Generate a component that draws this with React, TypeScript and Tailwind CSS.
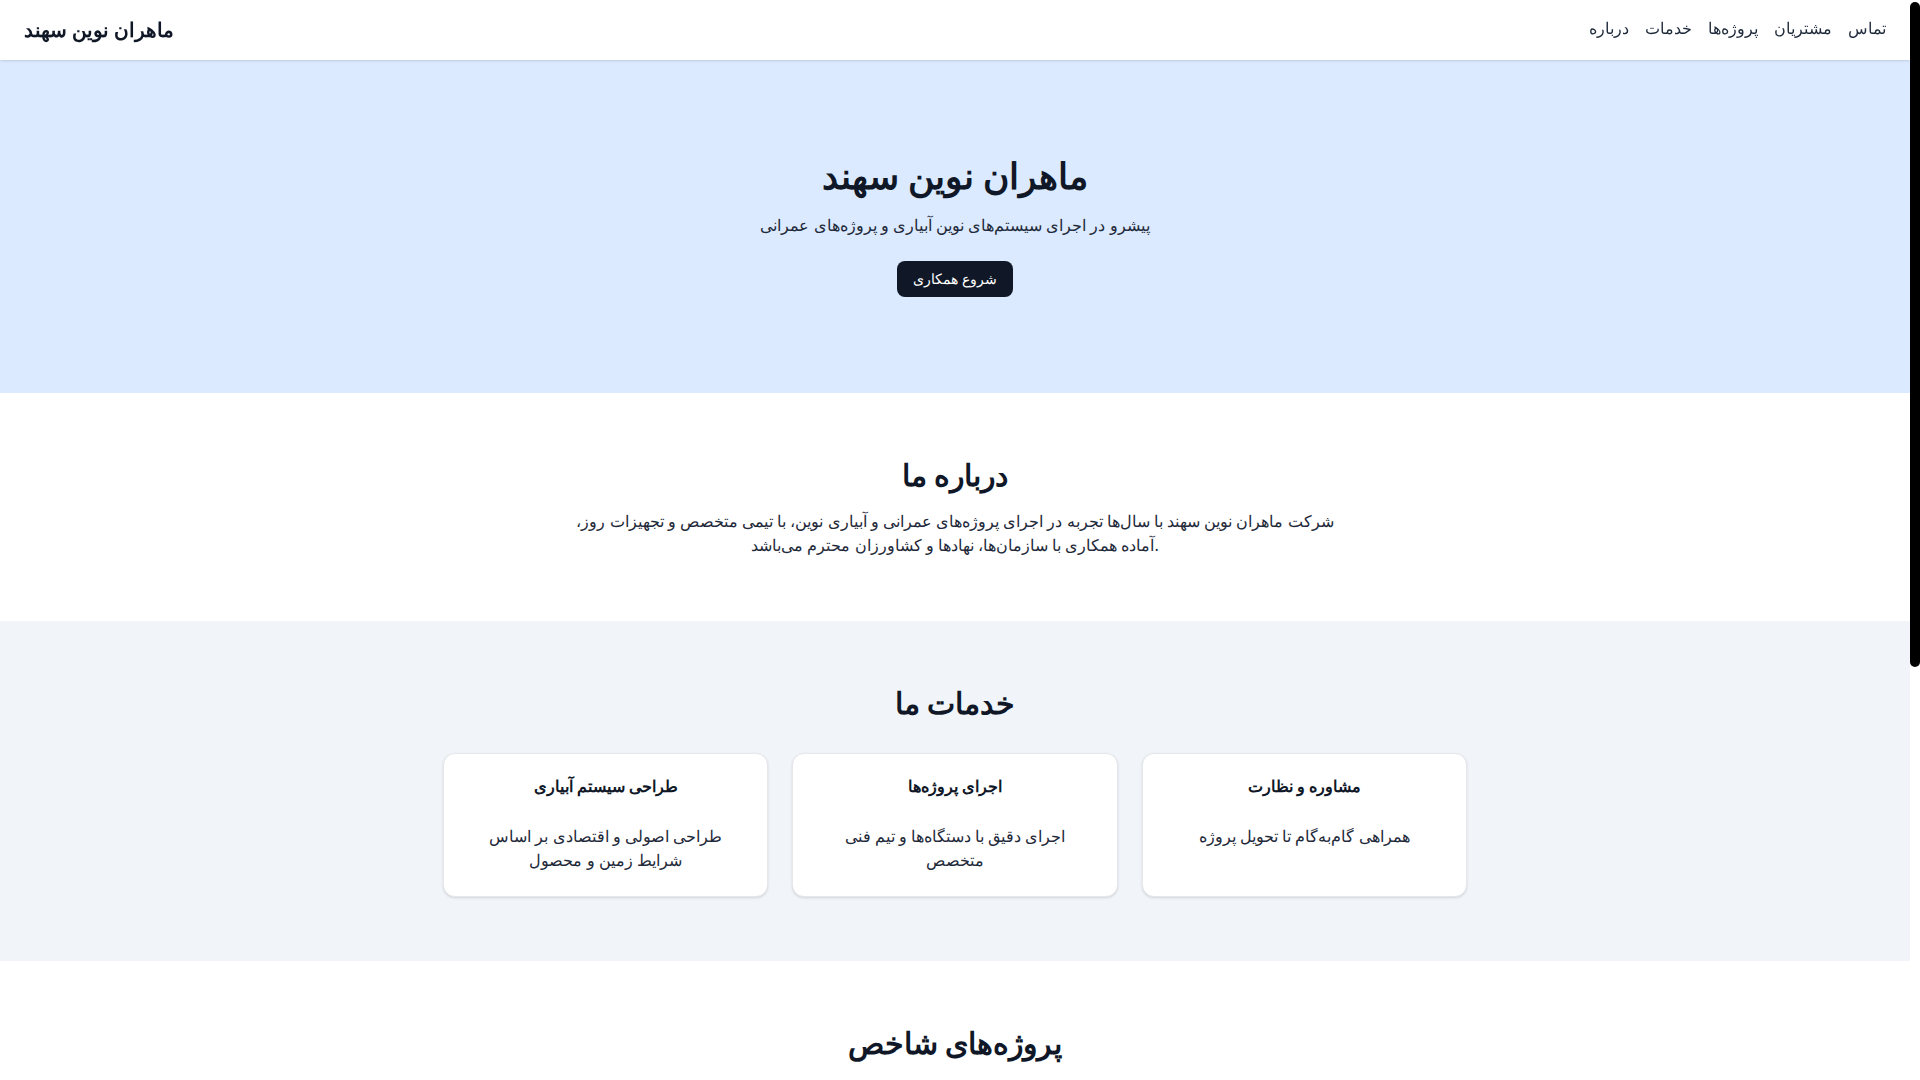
const navLinks = ["درباره", "خدمات", "پروژه‌ها", "مشتریان", "تماس"];

const services = [
  { title: "طراحی سیستم آبیاری", desc: "طراحی اصولی و اقتصادی بر اساس شرایط زمین و محصول" },
  { title: "اجرای پروژه‌ها", desc: "اجرای دقیق با دستگاه‌ها و تیم فنی متخصص" },
  { title: "مشاوره و نظارت", desc: "همراهی گام‌به‌گام تا تحویل پروژه" },
];

const projects = [
  { title: "آبیاری قطره‌ای باغات", desc: "اجرای سیستم آبیاری در ۱۲۰ هکتار باغ" },
  { title: "شبکه آبرسانی روستایی", desc: "طراحی و اجرای خطوط انتقال آب" },
  { title: "کانال‌کشی و زهکشی", desc: "احداث کانال‌های بتنی و زهکش اراضی" },
];

export default function App() {
  return (
    <div className="flex h-screen bg-white text-gray-900 font-['Noto_Sans',sans-serif]">
      <main className="min-w-0 flex-1 overflow-y-auto">
        <header className="sticky top-0 z-10 flex justify-between bg-white px-6 py-4 shadow-sm">
          <h1 className="text-xl font-bold">ماهران نوین سهند</h1>
          <nav className="flex gap-4 text-base text-gray-800">
            {navLinks.map((l) => (
              <a key={l} href="#" className="hover:text-blue-600">
                {l}
              </a>
            ))}
          </nav>
        </header>

        <section className="bg-blue-100 px-6 py-24 text-center">
          <h2 className="mb-[17px] text-4xl font-bold">ماهران نوین سهند</h2>
          <p className="mb-6 text-base text-gray-800">پیشرو در اجرای سیستم‌های نوین آبیاری و پروژه‌های عمرانی</p>
          <button
            type="button"
            className="rounded-lg bg-gray-900 px-4 py-2 text-sm text-white hover:bg-gray-800"
          >
            شروع همکاری
          </button>
        </section>

        <section className="px-6 py-16 text-center">
          <h2 className="mb-4 text-3xl font-bold">درباره ما</h2>
          <p className="mx-auto max-w-3xl text-base text-gray-800">
            شرکت ماهران نوین سهند با سال‌ها تجربه در اجرای پروژه‌های عمرانی و آبیاری نوین، با تیمی متخصص و تجهیزات روز، آماده همکاری با سازمان‌ها، نهادها و کشاورزان محترم می‌باشد.
          </p>
        </section>

        <section className="bg-slate-100 px-6 py-16 text-center">
          <h2 className="mb-8 text-3xl font-bold">خدمات ما</h2>
          <div className="mx-auto grid max-w-5xl grid-cols-3 gap-6">
            {services.map((s) => (
              <div key={s.title} className="rounded-xl border border-gray-200 bg-white px-6 pt-5 pb-6 shadow-sm">
                <h3 className="mb-[26px] text-base leading-6 font-bold">{s.title}</h3>
                <p className="text-base text-gray-800">{s.desc}</p>
              </div>
            ))}
          </div>
        </section>

        <section className="px-6 py-16 text-center">
          <h2 className="mb-8 text-3xl font-bold">پروژه‌های شاخص</h2>
          <div className="mx-auto grid max-w-5xl grid-cols-3 gap-6">
            {projects.map((p) => (
              <div key={p.title} className="rounded-xl border border-gray-200 bg-white p-6 shadow-sm">
                <div className="mb-4 h-48 rounded-lg bg-gray-200" />
                <h3 className="mb-2 text-base font-bold">{p.title}</h3>
                <p className="text-sm text-gray-700">{p.desc}</p>
              </div>
            ))}
          </div>
        </section>

        <section className="bg-slate-100 px-6 py-16 text-center">
          <h2 className="mb-4 text-3xl font-bold">تماس با ما</h2>
          <p className="text-gray-800">تلفن: ۰۴۱-۳۳۳۳۳۳۳۳ | ایمیل: info@mahrannovin.ir</p>
        </section>

        <footer className="bg-gray-900 py-6 text-center text-sm text-gray-300">
          © ماهران نوین سهند
        </footer>
      </main>

      {/* scrollbar track */}
      <div className="w-[10px] shrink-0 bg-white pt-0.5">
        <div className="h-[665px] rounded-full bg-black" />
      </div>
    </div>
  );
}
